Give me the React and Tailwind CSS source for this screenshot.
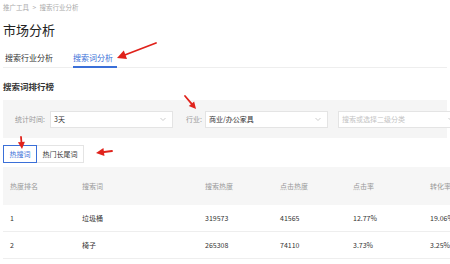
import React from "react";

// red annotation arrow: thin shaft, solid head at the tip
function Arrow({ from, to, head = 7, width = 2 }) {
  const [x1, y1] = from;
  const [x2, y2] = to;
  const dx = x2 - x1;
  const dy = y2 - y1;
  const len = Math.hypot(dx, dy);
  const ux = dx / len;
  const uy = dy / len;
  const bx = x2 - ux * head;
  const by = y2 - uy * head;
  const px = -uy * (head * 0.5);
  const py = ux * (head * 0.5);
  return (
    <g>
      <line x1={x1} y1={y1} x2={bx} y2={by} stroke="#e0221b" strokeWidth={width} strokeLinecap="round" />
      <polygon points={`${x2},${y2} ${bx + px},${by + py} ${bx - px},${by - py}`} fill="#e0221b" />
    </g>
  );
}

function Chevron() {
  return (
    <svg width="8" height="8" viewBox="0 0 8 8" className="shrink-0">
      <path d="M1.5 3 L4 5.5 L6.5 3" fill="none" stroke="#c0c0c0" strokeWidth="0.8" />
    </svg>
  );
}

function Select({ value, placeholder }) {
  return (
    <div className="flex h-[17px] w-[123px] shrink-0 items-center justify-between border border-[#e4e4e4] bg-white pl-[3px] pr-[5px]">
      <span className={value ? "text-[#333]" : "text-[#c4c4c4]"}>{value || placeholder}</span>
      <Chevron />
    </div>
  );
}

const rows = [
  { rank: 1, word: "垃圾桶", search: "319573", click: "41565", ctr: "12.77%", cvr: "19.06%" },
  { rank: 2, word: "椅子", search: "265308", click: "74110", ctr: "3.73%", cvr: "3.25%" },
];

export default function App() {
  return (
    <div
      className="relative h-[264px] w-[450px] overflow-hidden bg-white px-[3px]"
      style={{ fontFamily: '"Noto Sans CJK SC", "Noto Sans", sans-serif' }}
    >
      {/* breadcrumb */}
      <div className="pt-[3px] text-[6.5px] leading-[8px] text-[#aaa]">
        推广工具 <span className="mx-[2px]">&gt;</span> 搜索行业分析
      </div>

      <h1 className="mt-[11px] text-[13px] leading-[16px] text-[#222]">市场分析</h1>

      {/* tabs */}
      <div className="mt-[14px] flex border-b border-[#eeeeee] text-[8px] leading-[12px]">
        <div className="ml-[2px] pb-[3px] text-[#333]">搜索行业分析</div>
        <div className="ml-[20px] -mb-px border-b-2 border-[#3a6fd8] pb-[2px] pr-[4px] text-[#3a6fd8]">搜索词分析</div>
      </div>

      <div className="mt-[12px] text-[8.5px] font-bold leading-[12px] text-[#333]">搜索词排行榜</div>

      {/* filters */}
      <div className="mt-[8px] flex h-[38px] items-center bg-[#f5f5f5] pl-[12px] text-[7px] leading-[9px]">
        <span className="w-[35px] shrink-0 text-[#999]">统计时间:</span>
        <Select value="3天" />
        <span className="ml-[13px] w-[19px] shrink-0 text-[#999]">行业:</span>
        <Select value="商业/办公家具" />
        <div className="ml-[10px]">
          <Select placeholder="搜索或选择二级分类" />
        </div>
      </div>

      {/* word type toggle */}
      <div className="mt-[7px] flex text-[7px]">
        <div className="flex h-[18px] w-[34px] items-center justify-center border border-[#3a6fd8] text-[#3a6fd8]">热搜词</div>
        <div className="flex h-[18px] w-[47px] items-center justify-center border border-l-0 border-[#e4e4e4] text-[#333]">热门长尾词</div>
      </div>

      {/* ranking table */}
      <div className="mt-[4px] w-[460px] text-[7px]">
        <div className="flex h-[38px] items-center bg-[#f6f6f6] text-[#999]">
          <span className="w-[79px] pl-[7px]">热度排名</span>
          <span className="w-[123px]">搜索词</span>
          <span className="w-[75px]">搜索热度</span>
          <span className="w-[73px]">点击热度</span>
          <span className="w-[77px]">点击率</span>
          <span>转化率</span>
        </div>
        {rows.map((r) => (
          <div key={r.rank} className="flex h-[27px] items-center border-b border-[#eeeeee] text-[#333]">
            <span className="w-[79px] pl-[7px]">{r.rank}</span>
            <span className="w-[123px]">{r.word}</span>
            <span className="w-[75px]">{r.search}</span>
            <span className="w-[73px]">{r.click}</span>
            <span className="w-[77px]">{r.ctr}</span>
            <span>{r.cvr}</span>
          </div>
        ))}
      </div>

      {/* annotation arrows */}
      <svg className="pointer-events-none absolute left-0 top-0" width="450" height="264">
        <Arrow from={[156, 43]} to={[117, 58]} head={9} width={1.8} />
        <Arrow from={[185, 96]} to={[196, 109]} head={7} width={1.8} />
        <Arrow from={[21, 137]} to={[22, 149]} head={7} width={1.8} />
        <Arrow from={[112, 151]} to={[96, 153]} head={8} width={1.8} />
      </svg>
    </div>
  );
}
